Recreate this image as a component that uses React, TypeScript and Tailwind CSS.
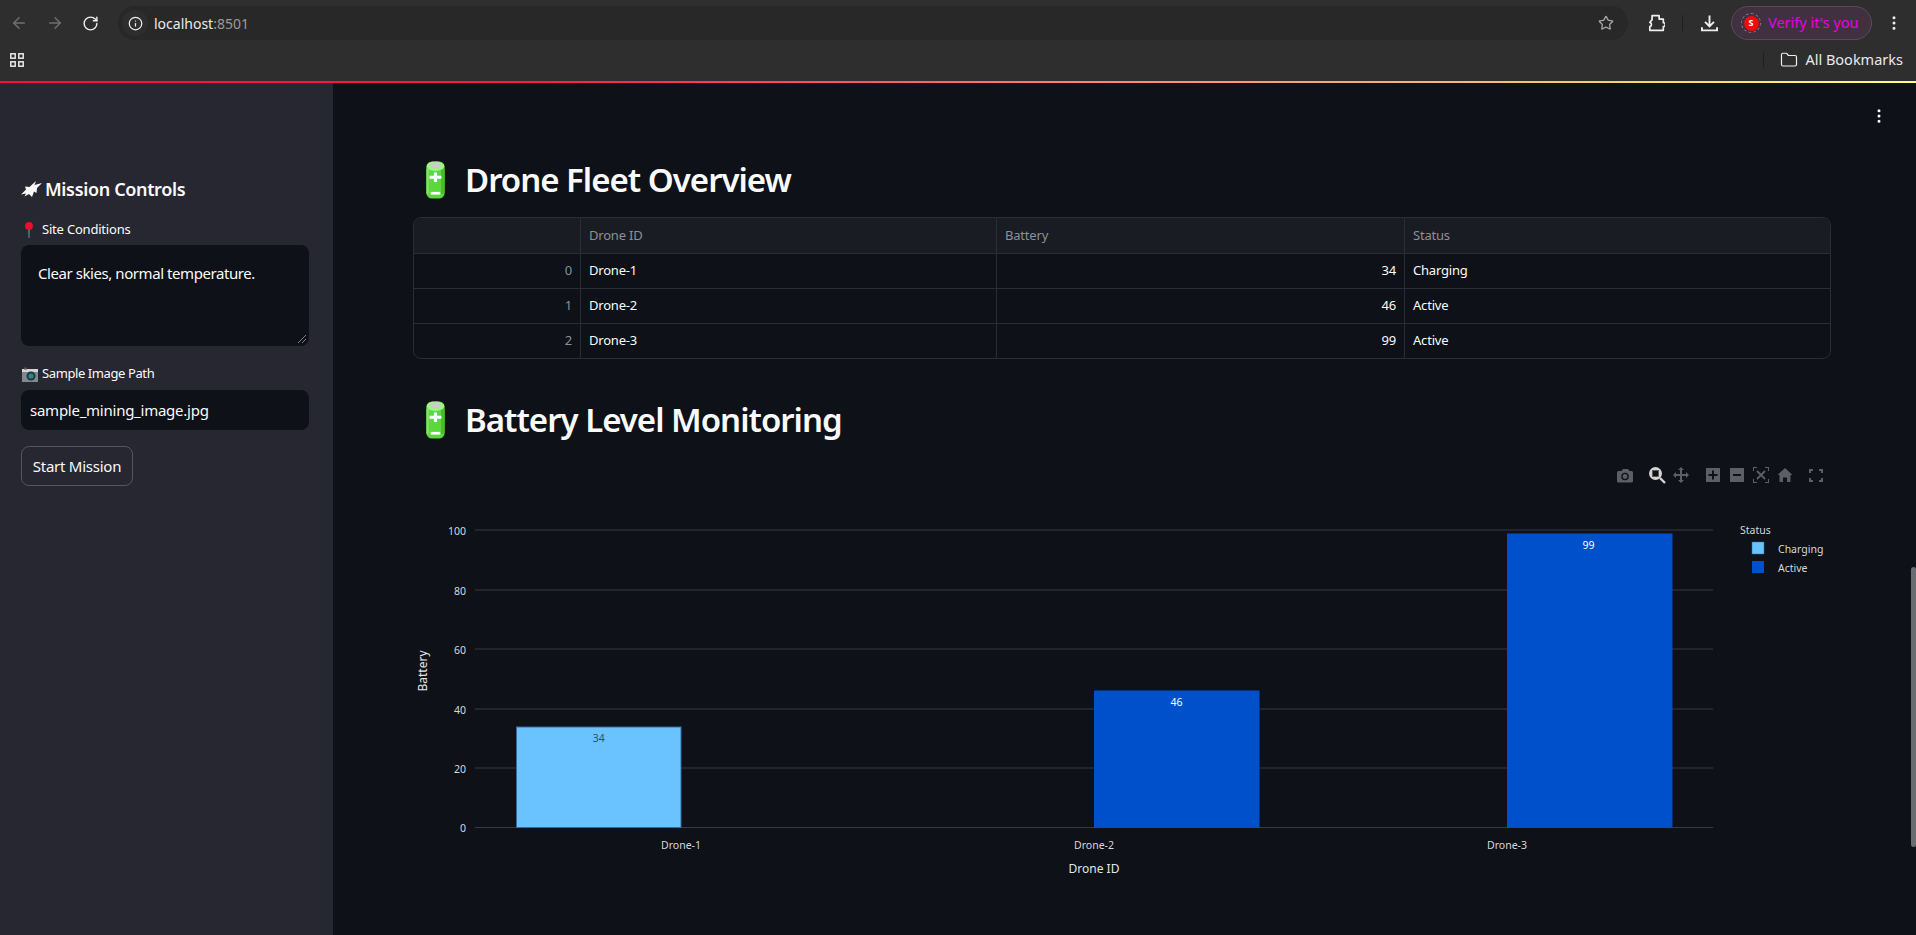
import { ArrowLeft, ArrowRight, RotateCw, Info, Star, EllipsisVertical, Folder } from "lucide-react";

const sans = "font-['Noto_Sans',sans-serif]";

function Battery({ className }: { className: string }) {
  return (
    <svg viewBox="0 0 24 48" className={className}>
      <rect x="0.5" y="0.5" width="23" height="47" rx="7" fill="#5bd83c" />
      <rect x="19" y="9" width="4.5" height="33" rx="2.2" fill="#48bb2e" />
      <rect x="0.5" y="9" width="3" height="33" rx="1.5" fill="#7cea5c" />
      <ellipse cx="12" cy="6.5" rx="11" ry="6" fill="#a6ee90" />
      <ellipse cx="12" cy="5.5" rx="6" ry="3.4" fill="#c9cdcb" />
      <path d="M10 14.5h4v4h5.500v4H14v4h-4v-4H4.500v-4H10z" fill="#fff" />
      <rect x="6" y="39" width="12" height="3.5" fill="#fff" />
    </svg>
  );
}

function BatteryHeading({ title, className }: { title: string; className: string }) {
  return (
    <h2 className={`flex h-[50px] items-center text-[#fafafa] ${className}`}>
      <Battery className="ml-[13px] h-[40px] w-[19px] shrink-0" />
      <span className={`ml-[20px] text-[33px] font-semibold tracking-[-1px] ${sans}`}>{title}</span>
    </h2>
  );
}

function Chrome() {
  return (
    <header className={`h-[81px] shrink-0 bg-[#2e2e2e] ${sans}`}>
      <div className="flex h-[46px] items-start pt-[6px]">
        <div className="flex h-[34px] w-[118px] items-center">
          <ArrowLeft className="ml-[10px] h-[18px] w-[18px] text-[#707070]" />
          <ArrowRight className="ml-[18px] h-[18px] w-[18px] text-[#707070]" />
          <RotateCw className="ml-[18px] h-[17px] w-[17px] text-[#eeeeee]" />
        </div>
        <div className="flex h-[34px] w-[1510px] items-center rounded-full bg-[#282828]">
          <span className="ml-[4px] flex h-[26px] w-[26px] items-center justify-center rounded-full bg-[#2e2e2e]">
            <Info className="h-[15px] w-[15px] text-[#eeeeee]" />
          </span>
          <span className="ml-[6px] text-[14px] text-[#e8eaed]">
            localhost<span className="text-[#9a9a9a]">:8501</span>
          </span>
          <Star className="ml-auto mr-[14px] h-[16px] w-[16px] text-[#a5a5a5]" />
        </div>
        <div className="flex h-[34px] items-center">
          <svg viewBox="0 0 16 16" className="ml-[19px] h-[18px] w-[18px]" fill="none" stroke="#eeeeee" strokeWidth="1.5" strokeLinejoin="round">
            <path d="M4.5 1.5h6.300v3h3.700v3.300a1.700 1.700 0 0 1 0 3.400v3.300H2.500v-3.300a1.900 1.900 0 0 0 0-3.700L4.500 5z" />
          </svg>
          <span className="ml-[17px] h-[16px] w-[1px] bg-[#1f1f1f]" />
          <svg viewBox="0 0 16 16" className="ml-[18px] h-[17px] w-[17px]" fill="none" stroke="#eeeeee" strokeWidth="1.8">
            <path d="M8 0.500v10M3.800 6.500 8 10.700l4.200-4.200M0.900 11.500v3h14.200v-3" />
          </svg>
          <div className="ml-[13px] flex h-[34px] w-[141px] items-center rounded-full border border-[#5a4a58] bg-[#41303f]">
            <span className="ml-[9px] flex h-[20px] w-[20px] items-center justify-center rounded-full border border-dashed border-[#8a7d88]">
              <span className="flex h-[15px] w-[15px] items-center justify-center rounded-full bg-[#f00c0c] text-[9px] font-bold text-white">S</span>
            </span>
            <span className="ml-[7px] whitespace-nowrap text-[14.5px] text-[#e800e8]">Verify it's you</span>
          </div>
          <EllipsisVertical className="ml-[13px] h-[18px] w-[18px] text-[#eeeeee]" />
        </div>
      </div>
      <div className="flex h-[35px] items-start">
        <svg viewBox="0 0 14 14" className="ml-[10px] mt-[7px] h-[14px] w-[14px]" fill="none" stroke="#e8e8e8" strokeWidth="1.5">
          <rect x="0.8" y="0.8" width="4.4" height="4.4" />
          <rect x="8.8" y="0.8" width="4.4" height="4.4" />
          <rect x="0.8" y="8.8" width="4.4" height="4.4" />
          <rect x="8.8" y="8.8" width="4.4" height="4.4" />
        </svg>
        <span className="ml-auto mt-[6px] h-[16px] w-[1px] bg-[#1f1f1f]" />
        <Folder className="ml-[16px] mt-[5px] h-[18px] w-[18px] text-[#eeeeee]" strokeWidth={1.6} />
        <span className="ml-[7px] mr-[13px] mt-[3px] text-[14.5px] text-[#e8eaed]">All Bookmarks</span>
      </div>
    </header>
  );
}

function Sidebar() {
  return (
    <aside className={`h-full w-[333px] shrink-0 bg-[#272731] pl-[21px] pr-[24px] pt-[91px] text-[#fafafa] ${sans}`}>
      <h3 className="flex h-[30px] items-center text-[18px] font-semibold tracking-[-0.35px]">
        <svg viewBox="0 0 21 16" className="h-[16px] w-[21px] shrink-0">
          <path d="M0 13.500 5 8.500 4 5.500 8.500 6 15 0 13.500 4 21 2 16 7 15.500 12 13 10.500 11 16 8 13 3.500 15.500 5 12.500z" fill="#fafafa" />
        </svg>
        <span className="ml-[3px]">Mission Controls</span>
      </h3>
      <label className="mt-[16px] flex h-[20px] items-center text-[13px] tracking-[-0.2px]">
        <svg viewBox="0 0 12 16" className="ml-[2px] h-[16px] w-[12px]">
          <path d="M5.400 7h1.200l-.2 9h-.8z" fill="#6fa0a8" />
          <circle cx="6" cy="4" r="3.900" fill="#e8112d" />
        </svg>
        <span className="ml-[7px]">Site Conditions</span>
      </label>
      <div className="relative mt-[5px] h-[101px] rounded-lg bg-[#0e1117] pl-[17px] pt-[16px] text-[15px] leading-[24px] tracking-[-0.43px]">
        Clear skies, normal temperature.
        <svg viewBox="0 0 8 8" className="absolute bottom-[3px] right-[3px] h-[8px] w-[8px]" stroke="#a0a0a0" strokeWidth="0.8">
          <path d="M0 8 8 0M4 8 8 4" />
        </svg>
      </div>
      <label className="mt-[18px] flex h-[20px] items-center text-[13px] tracking-[-0.4px]">
        <svg viewBox="0 0 16 15" className="ml-[1px] h-[15px] w-[16px]">
          <rect x="0" y="2" width="16" height="13" fill="#7d8a90" />
          <rect x="0" y="2" width="16" height="3" fill="#d0d6d8" />
          <rect x="2" y="0.5" width="3" height="2" fill="#4a5358" />
          <circle cx="9" cy="9" r="4.500" fill="#2c3336" />
          <circle cx="9" cy="9" r="2.600" fill="#1f8a96" />
        </svg>
        <span className="ml-[4px]">Sample Image Path</span>
      </label>
      <div className="mt-[6px] flex h-[40px] items-center rounded-lg bg-[#0e1117] pl-[9px] text-[15px] tracking-[-0.25px]">
        sample_mining_image.jpg
      </div>
      <button className="mt-[16px] h-[40px] w-[112px] rounded-lg border border-[#55565f] text-[15px] tracking-[-0.25px]">
        Start Mission
      </button>
    </aside>
  );
}

const rows = [
  { i: 0, id: "Drone-1", b: 34, s: "Charging" },
  { i: 1, id: "Drone-2", b: 46, s: "Active" },
  { i: 2, id: "Drone-3", b: 99, s: "Active" },
];

function FleetTable() {
  const cell = "flex items-center border-[#2b2c34] px-[8px]";
  return (
    <div className={`grid h-[142px] grid-cols-[167px_416px_408px_1fr] grid-rows-[35px_35px_35px_35px] overflow-hidden rounded-lg border border-[#2b2c34] text-[13px] tracking-[-0.2px] text-[#fafafa] ${sans}`}>
      <div className={`${cell} border-r bg-[#1a1c24]`} />
      <div className={`${cell} border-r bg-[#1a1c24] text-[#8e9096]`}>Drone ID</div>
      <div className={`${cell} border-r bg-[#1a1c24] text-[#8e9096]`}>Battery</div>
      <div className={`${cell} bg-[#1a1c24] text-[#8e9096]`}>Status</div>
      {rows.map((r) => (
        <div key={r.i} className="contents">
          <div className={`${cell} justify-end border-r border-t text-[#8e9096]`}>{r.i}</div>
          <div className={`${cell} border-r border-t`}>{r.id}</div>
          <div className={`${cell} justify-end border-r border-t`}>{r.b}</div>
          <div className={`${cell} border-t`}>{r.s}</div>
        </div>
      ))}
    </div>
  );
}

const grid = [
  { v: 100, y: 530 },
  { v: 80, y: 590 },
  { v: 60, y: 649 },
  { v: 40, y: 709 },
  { v: 20, y: 768 },
  { v: 0, y: 827.5 },
];

const bars = [
  { x: 516, top: 727, fill: "#6ac2ff", edge: "#2f6f9f", label: "34", lx: 598.7, ly: 738, lc: "#444a50", name: "Drone-1", tx: 681 },
  { x: 1094, top: 691, fill: "#0050cb", edge: "#0050cb", label: "46", lx: 1176.5, ly: 702, lc: "#ffffff", name: "Drone-2", tx: 1094 },
  { x: 1507, top: 534, fill: "#0050cb", edge: "#0050cb", label: "99", lx: 1588.5, ly: 545, lc: "#ffffff", name: "Drone-3", tx: 1507 },
];

function Modebar() {
  const c = "#5c5f63";
  return (
    <g>
      <path d="M1617 472.500a1.500 1.500 0 0 1 1.500-1.500h3l1.500-2h5l1.500 2h2a1.500 1.500 0 0 1 1.500 1.500v8.500a1.500 1.500 0 0 1-1.500 1.500h-13a1.500 1.500 0 0 1-1.500-1.500z" fill={c} />
      <circle cx="1625" cy="476.500" r="3.800" fill="#0e1117" />
      <circle cx="1625" cy="476.500" r="2.400" fill={c} />
      <circle cx="1655.500" cy="473.500" r="6.500" fill="#d4d4d4" />
      <rect x="1652.500" y="470.500" width="6" height="6" fill="#0e1117" stroke="#555" strokeWidth="0.8" />
      <path d="M1660 478l5 5" stroke="#d4d4d4" strokeWidth="2.400" />
      <path d="M1681 467l3 3h-2v4h4v-2l3 3-3 3v-2h-4v4h2l-3 3-3-3h2v-4h-4v2l-3-3 3-3v2h4v-4h-2z" fill={c} />
      <rect x="1706" y="468" width="14" height="14" fill={c} />
      <path d="M1712 470.500h2v3.500h3.500v2H1714v3.500h-2V476h-3.500v-2h3.500z" fill="#0e1117" />
      <rect x="1730" y="468" width="14" height="14" fill={c} />
      <rect x="1733" y="474" width="8" height="2" fill="#0e1117" />
      <path d="M1753.500 471v-3.500h3.500M1765 467.500h3.500v3.500M1768.500 479v3.500H1765M1757 482.500h-3.500V479" fill="none" stroke={c} strokeWidth="1.100" />
      <path d="M1757 471l8 8M1765 471l-8 8" stroke={c} strokeWidth="1.800" />
      <path d="M1785 468l7.500 7h-2v7h-3.500v-4.500h-4V482h-3.500v-7h-2z" fill={c} />
      <path d="M1810 473v-3h3M1819 470h3v3M1822 478v3h-3M1813 481h-3v-3" fill="none" stroke={c} strokeWidth="2" />
    </g>
  );
}

function Chart() {
  const tick = "fill-[#d5d7dc] text-[10.5px]";
  return (
    <svg viewBox="413 445 1418 480" className={`block h-[480px] w-[1418px] ${sans}`}>
      <Modebar />
      {grid.map((g) => (
        <g key={g.v}>
          <line x1="475" x2="1713" y1={g.y} y2={g.y} stroke="#383a42" strokeWidth="1" />
          <text x="466" y={g.y + 4.5} textAnchor="end" className={tick}>{g.v}</text>
        </g>
      ))}
      {bars.map((b) => (
        <g key={b.name}>
          <rect x={b.x + 0.5} y={b.top} width="164.500" height={827.5 - b.top} fill={b.fill} stroke={b.edge} strokeWidth="1" />
          <text x={b.lx} y={b.ly + 4} textAnchor="middle" fill={b.lc} className="text-[10.5px]">{b.label}</text>
          <text x={b.tx} y="849" textAnchor="middle" className={tick}>{b.name}</text>
        </g>
      ))}
      <text x="1094" y="872.500" textAnchor="middle" className="fill-[#e4e6ea] text-[12px]">Drone ID</text>
      <text transform="translate(427 671) rotate(-90)" textAnchor="middle" className="fill-[#e4e6ea] text-[12px]">Battery</text>
      <text x="1740" y="534" className={tick}>Status</text>
      <rect x="1752" y="542" width="12" height="12" fill="#6ac2ff" stroke="#2f6f9f" strokeWidth="0.5" />
      <text x="1778" y="553" className={tick}>Charging</text>
      <rect x="1752" y="561" width="12" height="12" fill="#0050cb" />
      <text x="1778" y="572" className={tick}>Active</text>
    </svg>
  );
}

export default function App() {
  return (
    <div className="flex h-[935px] w-[1916px] flex-col overflow-hidden bg-[#0e1117]">
      <Chrome />
      <div className="h-[2px] shrink-0 bg-[linear-gradient(90deg,#ff0a3c_0%,#ff1a48_28%,#ff8a6a_58%,#ffc070_80%,#fffd80_100%)]" />
      <div className="relative flex min-h-0 flex-1">
        <Sidebar />
        <main className="min-w-0 flex-1 pl-[80px] pr-[85px] pt-[72px]">
          <BatteryHeading title="Drone Fleet Overview" className="" />
          <div className="mt-[12px]">
            <FleetTable />
          </div>
          <BatteryHeading title="Battery Level Monitoring" className="mt-[36px]" />
          <Chart />
        </main>
        <EllipsisVertical className="absolute right-[28px] top-[24px] h-[18px] w-[18px] text-[#fafafa]" />
        <div className="absolute right-0 top-[484px] h-[280px] w-[5px] rounded-full bg-[#6b6c70]" />
      </div>
    </div>
  );
}
